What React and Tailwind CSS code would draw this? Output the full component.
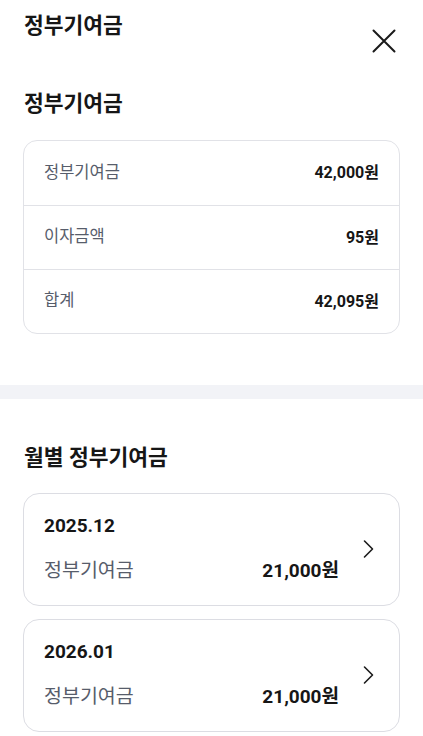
import React from 'react';

const summary = [
  { label: '정부기여금', value: '42,000원' },
  { label: '이자금액', value: '95원' },
  { label: '합계', value: '42,095원' },
];

const monthly = [
  { month: '2025.12', label: '정부기여금', value: '21,000원' },
  { month: '2026.01', label: '정부기여금', value: '21,000원' },
];

const CloseIcon = () => (
  <svg width="24" height="24" viewBox="0 0 24 24" fill="none" stroke="#1a1a1a" strokeWidth="2" strokeLinecap="round">
    <path d="M1.5 1.5 L22.5 22.5 M22.5 1.5 L1.5 22.5" />
  </svg>
);

const Chevron = () => (
  <svg width="16" height="20" viewBox="0 0 16 20" fill="none" stroke="#1a1a1a" strokeWidth="1.6" strokeLinecap="round" strokeLinejoin="round">
    <path d="M3.5 2 L11.5 10 L3.5 18" />
  </svg>
);

const App = () => {
  return (
    <div className="min-h-screen bg-white text-[#161616]" style={{ fontFamily: "Roboto, 'Noto Sans CJK KR', sans-serif" }}>
      <header className="flex justify-between items-start pl-6 pr-[27px] pt-[12px]">
        <h1 className="text-[21.5px] leading-[28px] font-bold">정부기여금</h1>
        <button className="mt-[17px]">
          <CloseIcon />
        </button>
      </header>

      <section className="pt-[37px]">
        <h2 className="px-6 text-[21.5px] leading-[28px] font-bold">정부기여금</h2>
        <div className="mx-[23px] mt-[22px] border border-[#e1e2e7] rounded-[14px]">
          {summary.map((row, i) => (
            <div
              key={row.label}
              className={`flex items-center justify-between px-5 h-16 ${i > 0 ? 'border-t border-[#e1e2e7]' : ''}`}
            >
              <span className="text-[16.5px] text-[#575d6b]">{row.label}</span>
              <span className="text-[16px] font-bold">{row.value}</span>
            </div>
          ))}
        </div>
      </section>

      <div className="h-[14px] bg-[#f2f3f7] mt-[51px]" />

      <section className="pt-[45px] pb-6">
        <h2 className="px-6 text-[21.5px] leading-[28px] font-bold">월별 정부기여금</h2>
        <div className="mx-[23px] mt-[21px] flex flex-col gap-[13px]">
          {monthly.map((m) => (
            <div key={m.month} className="flex items-center border border-[#dcdde3] rounded-[16px] pl-5 pr-[22px] pt-[19px] pb-[21px]">
              <div className="flex-1 flex flex-col gap-[19px]">
                <span className="text-[19px] leading-[26px] font-bold">{m.month}</span>
                <div className="flex justify-between items-center">
                  <span className="text-[19.5px] leading-[26px] text-[#575d6b]">{m.label}</span>
                  <span className="text-[19px] leading-[26px] font-bold">{m.value}</span>
                </div>
              </div>
              <div className="ml-[22px]">
                <Chevron />
              </div>
            </div>
          ))}
        </div>
      </section>
    </div>
  );
};

export default App;
